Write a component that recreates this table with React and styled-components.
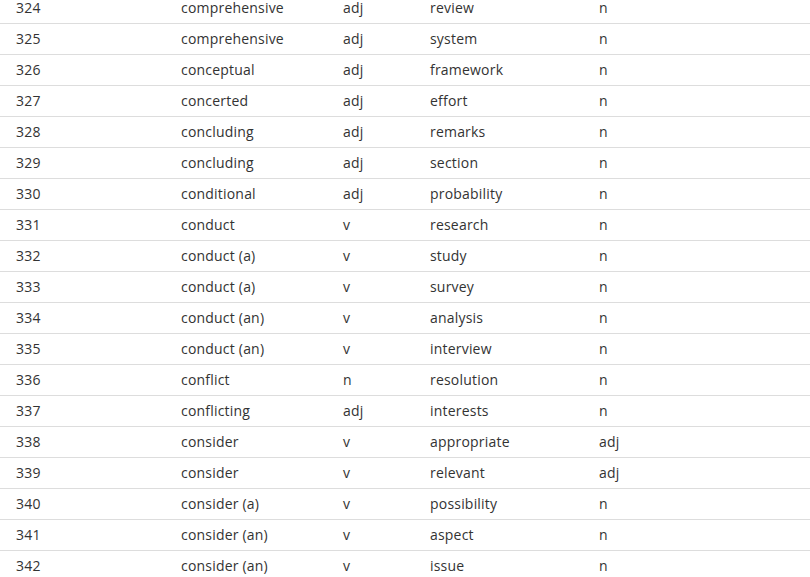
import React from "react";
import styled, { createGlobalStyle } from "styled-components";

const Global = createGlobalStyle`
  html, body { margin: 0; padding: 0; background: #fff; }
  body { font-family: "Open Sans", "Noto Sans", sans-serif; color: #333; overflow: hidden; }
`;

const Table = styled.div`
  margin-top: -7px;
  width: 810px;
`;

const Row = styled.div`
  display: grid;
  grid-template-columns: 165px 162px 87px 169px 1fr;
  height: 30px;
  align-items: center;
  border-bottom: 1px solid #dddddd;
  padding-left: 16px;
  font-size: 14px;
  letter-spacing: 0.2px;
`;

const Cell = styled.span`
  white-space: nowrap;
  line-height: 30px;
`;

const rows = [
  [324, "comprehensive", "adj", "review", "n"],
  [325, "comprehensive", "adj", "system", "n"],
  [326, "conceptual", "adj", "framework", "n"],
  [327, "concerted", "adj", "effort", "n"],
  [328, "concluding", "adj", "remarks", "n"],
  [329, "concluding", "adj", "section", "n"],
  [330, "conditional", "adj", "probability", "n"],
  [331, "conduct", "v", "research", "n"],
  [332, "conduct (a)", "v", "study", "n"],
  [333, "conduct (a)", "v", "survey", "n"],
  [334, "conduct (an)", "v", "analysis", "n"],
  [335, "conduct (an)", "v", "interview", "n"],
  [336, "conflict", "n", "resolution", "n"],
  [337, "conflicting", "adj", "interests", "n"],
  [338, "consider", "v", "appropriate", "adj"],
  [339, "consider", "v", "relevant", "adj"],
  [340, "consider (a)", "v", "possibility", "n"],
  [341, "consider (an)", "v", "aspect", "n"],
  [342, "consider (an)", "v", "issue", "n"],
];

export default function App() {
  return (
    <>
      <Global />
      <Table>
        {rows.map((r) => (
          <Row key={r[0]}>
            {r.map((c, i) => (
              <Cell key={i}>{c}</Cell>
            ))}
          </Row>
        ))}
      </Table>
    </>
  );
}
